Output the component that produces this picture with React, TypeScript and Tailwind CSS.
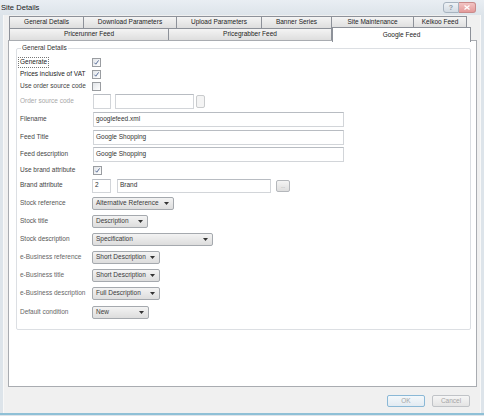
import React from "react";

const CheckBox = ({ checked }: { checked?: boolean }) => (
  <div className="w-[9px] h-[9px] border border-[#9a9da1] bg-gradient-to-br from-[#e2e5e9] to-[#ffffff] flex items-center justify-center">
    {checked && (
      <svg width="7" height="7" viewBox="0 0 7 7">
        <path d="M1.4 3.7 L2.8 5.2 L5.6 1.4" fill="none" stroke="#5a6f9a" strokeWidth="1" />
      </svg>
    )}
  </div>
);

const TextBox = ({ w, h = 15, value = "" }: { w: number; h?: number; value?: string }) => (
  <div
    className="border border-[#d2d5d9] border-t-[#b8bcc2] bg-white flex items-center pl-[2px] text-[#333] shrink-0"
    style={{ width: w, height: h }}
  >
    {value}
  </div>
);

const DotsButton = ({ w, h }: { w: number; h: number }) => (
  <div
    className="border border-[#b4b7bb] rounded-[2px] bg-gradient-to-b from-[#f4f4f4] to-[#dedede] flex items-end justify-center pb-[2px] text-[#9a9a9a] text-[5px] leading-none shrink-0"
    style={{ width: w, height: h }}
  >
    ...
  </div>
);

const Combo = ({ w, value }: { w: number; value: string }) => (
  <div
    className="h-[13px] border border-[#a5a9ae] rounded-[2px] bg-gradient-to-b from-[#f3f3f3] to-[#dddddd] flex items-center justify-between pl-[3px] pr-[4px] text-[#3a3a3a] shrink-0"
    style={{ width: w }}
  >
    <span>{value}</span>
    <svg width="5" height="3" viewBox="0 0 5 3">
      <path d="M0 0 L5 0 L2.5 3 Z" fill="#333" />
    </svg>
  </div>
);

const Row = ({ h, label, labelClass = "text-[#444]", children }: { h: number; label: React.ReactNode; labelClass?: string; children?: React.ReactNode }) => (
  <div className="flex items-center" style={{ height: h }}>
    <div className={"w-[72px] shrink-0 " + labelClass}>{label}</div>
    <div className="flex items-center">{children}</div>
  </div>
);

const Tab = ({ w, label, selected }: { w: number; label: string; selected?: boolean }) =>
  selected ? (
    <div
      className="h-[15px] -mt-[1px] -mb-[1px] relative z-10 bg-white border border-b-0 border-[#8d9199] flex items-center justify-center text-[#222] shrink-0"
      style={{ width: w }}
    >
      {label}
    </div>
  ) : (
    <div
      className="h-[13px] bg-gradient-to-b from-[#f4f4f4] to-[#dedede] border border-[#8d9199] -ml-[1px] first:ml-0 flex items-center justify-center text-[#222] shrink-0"
      style={{ width: w }}
    >
      {label}
    </div>
  );

export default function App() {
  return (
    <div className="w-[484px] h-[416px] flex flex-col bg-[#dde4ea] font-['Liberation_Sans',Arial,sans-serif] text-[6.5px] leading-none overflow-hidden">
      {/* title bar */}
      <div className="h-[15px] shrink-0 flex items-start justify-between bg-gradient-to-b from-[#e9eef3] to-[#dde4ea]">
        <div className="pl-[1px] pt-[4px] text-[7.6px] text-[#1a1a1a]">Site Details</div>
        <div className="flex pt-[2px] pr-[8px]">
          <div className="w-[16px] h-[11px] border border-[#a7b3bf] rounded-l-[3px] bg-gradient-to-b from-[#eef2f6] to-[#d3dbe3] flex items-center justify-center text-[7px] text-[#8a97a5] font-bold">
            ?
          </div>
          <div className="w-[17px] h-[11px] border border-l-0 border-[#c98a8a] rounded-r-[3px] bg-gradient-to-b from-[#f2c4c4] to-[#e49a9a] flex items-center justify-center">
            <svg width="6" height="5" viewBox="0 0 6 5">
              <path d="M0.5 0.5 L5.5 4.5 M5.5 0.5 L0.5 4.5" stroke="#ffffff" strokeWidth="1.3" />
            </svg>
          </div>
        </div>
      </div>

      {/* body */}
      <div className="flex-1 flex flex-col mx-[3px] bg-[#f0f0f0] border-l border-r border-[#f8f8f8] pt-[1px] pl-[4px] pr-[5px]">
        {/* tabs */}
        <div className="flex pl-[1px]">
          <Tab w={75} label="General Details" />
          <Tab w={94} label="Download Parameters" />
          <Tab w={86} label="Upload Parameters" />
          <Tab w={71} label="Banner Series" />
          <Tab w={83} label="Site Maintenance" />
          <Tab w={54} label="Kelkoo Feed" />
        </div>
        <div className="flex pl-[1px] -mt-[1px]">
          <Tab w={160} label="Pricerunner Feed" />
          <Tab w={164} label="Pricegrabber Feed" />
          <Tab w={139} label="Google Feed" selected />
        </div>

        {/* panel */}
        <div className="h-[347px] -mt-[1px] w-[469px] bg-white border border-[#a9acb1] pt-[4px] pl-[7px] pr-[5px]">
          <fieldset className="border border-[#dcdfe3] rounded-[2px] h-[285px] pl-[3px]">
            <legend className="ml-[1px] px-[1px] text-[#333]">General Details</legend>
            <div className="flex flex-col pt-[5px]">
              <Row
                h={12}
                label={
                  <span className="inline-block border border-dotted border-[#777] px-[1px] py-[1px] -ml-[2px] text-[#222]">
                    Generate
                  </span>
                }
              >
                <CheckBox checked />
              </Row>
              <Row h={11} label="Prices inclusive of VAT" labelClass="text-[#222]">
                <CheckBox checked />
              </Row>
              <Row h={13} label="Use order source code">
                <CheckBox />
              </Row>
              <Row h={18} label="Order source code" labelClass="text-[#a8a8a8]">
                <div className="flex items-center gap-[4px] pl-[1px]">
                  <TextBox w={18} />
                  <TextBox w={79} />
                </div>
                <div className="ml-[2px] w-[9px] h-[13px] border border-[#c9cbcd] rounded-[2px] bg-[#f4f4f4]" />
              </Row>
              <Row h={18} label="Filename">
                <div className="pl-[1px]">
                  <TextBox w={251} value="googlefeed.xml" />
                </div>
              </Row>
              <Row h={17} label="Feed Title">
                <div className="pl-[1px]">
                  <TextBox w={251} value="Google Shopping" />
                </div>
              </Row>
              <Row h={17} label="Feed description">
                <div className="pl-[1px]">
                  <TextBox w={251} value="Google Shopping" />
                </div>
              </Row>
              <Row h={15} label="Use brand attribute">
                <div className="pl-[1px]">
                  <CheckBox checked />
                </div>
              </Row>
              <Row h={16} label="Brand attribute">
                <TextBox w={19} h={14} value="2" />
                <div className="ml-[6px]">
                  <TextBox w={154} h={14} value="Brand" />
                </div>
                <div className="ml-[5px]">
                  <DotsButton w={14} h={12} />
                </div>
              </Row>
              <Row h={19} label="Stock reference" labelClass="text-[#555]">
                <Combo w={82} value="Alternative Reference" />
              </Row>
              <Row h={18} label="Stock title" labelClass="text-[#555]">
                <Combo w={56} value="Description" />
              </Row>
              <Row h={18} label="Stock description" labelClass="text-[#555]">
                <Combo w={121} value="Specification" />
              </Row>
              <Row h={18} label="e-Business reference" labelClass="text-[#666]">
                <Combo w={68} value="Short Description" />
              </Row>
              <Row h={18} label="e-Business title" labelClass="text-[#666]">
                <Combo w={68} value="Short Description" />
              </Row>
              <Row h={18} label="e-Business description" labelClass="text-[#666]">
                <Combo w={68} value="Full Description" />
              </Row>
              <Row h={19} label="Default condition" labelClass="text-[#666]">
                <Combo w={57} value="New" />
              </Row>
            </div>
          </fieldset>
        </div>

        {/* buttons */}
        <div className="flex justify-end gap-[7px] pt-[8px] pr-[5px]">
          <div className="w-[38px] h-[12px] border border-[#8ab8d6] rounded-[2px] bg-gradient-to-b from-[#f4f8fb] to-[#e2ebf2] flex items-center justify-center text-[#a5a5a5]">
            OK
          </div>
          <div className="w-[38px] h-[12px] border border-[#c0c3c7] rounded-[2px] bg-gradient-to-b from-[#f6f6f6] to-[#e4e4e4] flex items-center justify-center text-[#a5a5a5]">
            Cancel
          </div>
        </div>
        <div className="flex-1" />
      </div>
      <div className="h-[2px] shrink-0 bg-[#8fc0d6]" />
      <div className="h-[1px] shrink-0 bg-[#dde4ea]" />
    </div>
  );
}
